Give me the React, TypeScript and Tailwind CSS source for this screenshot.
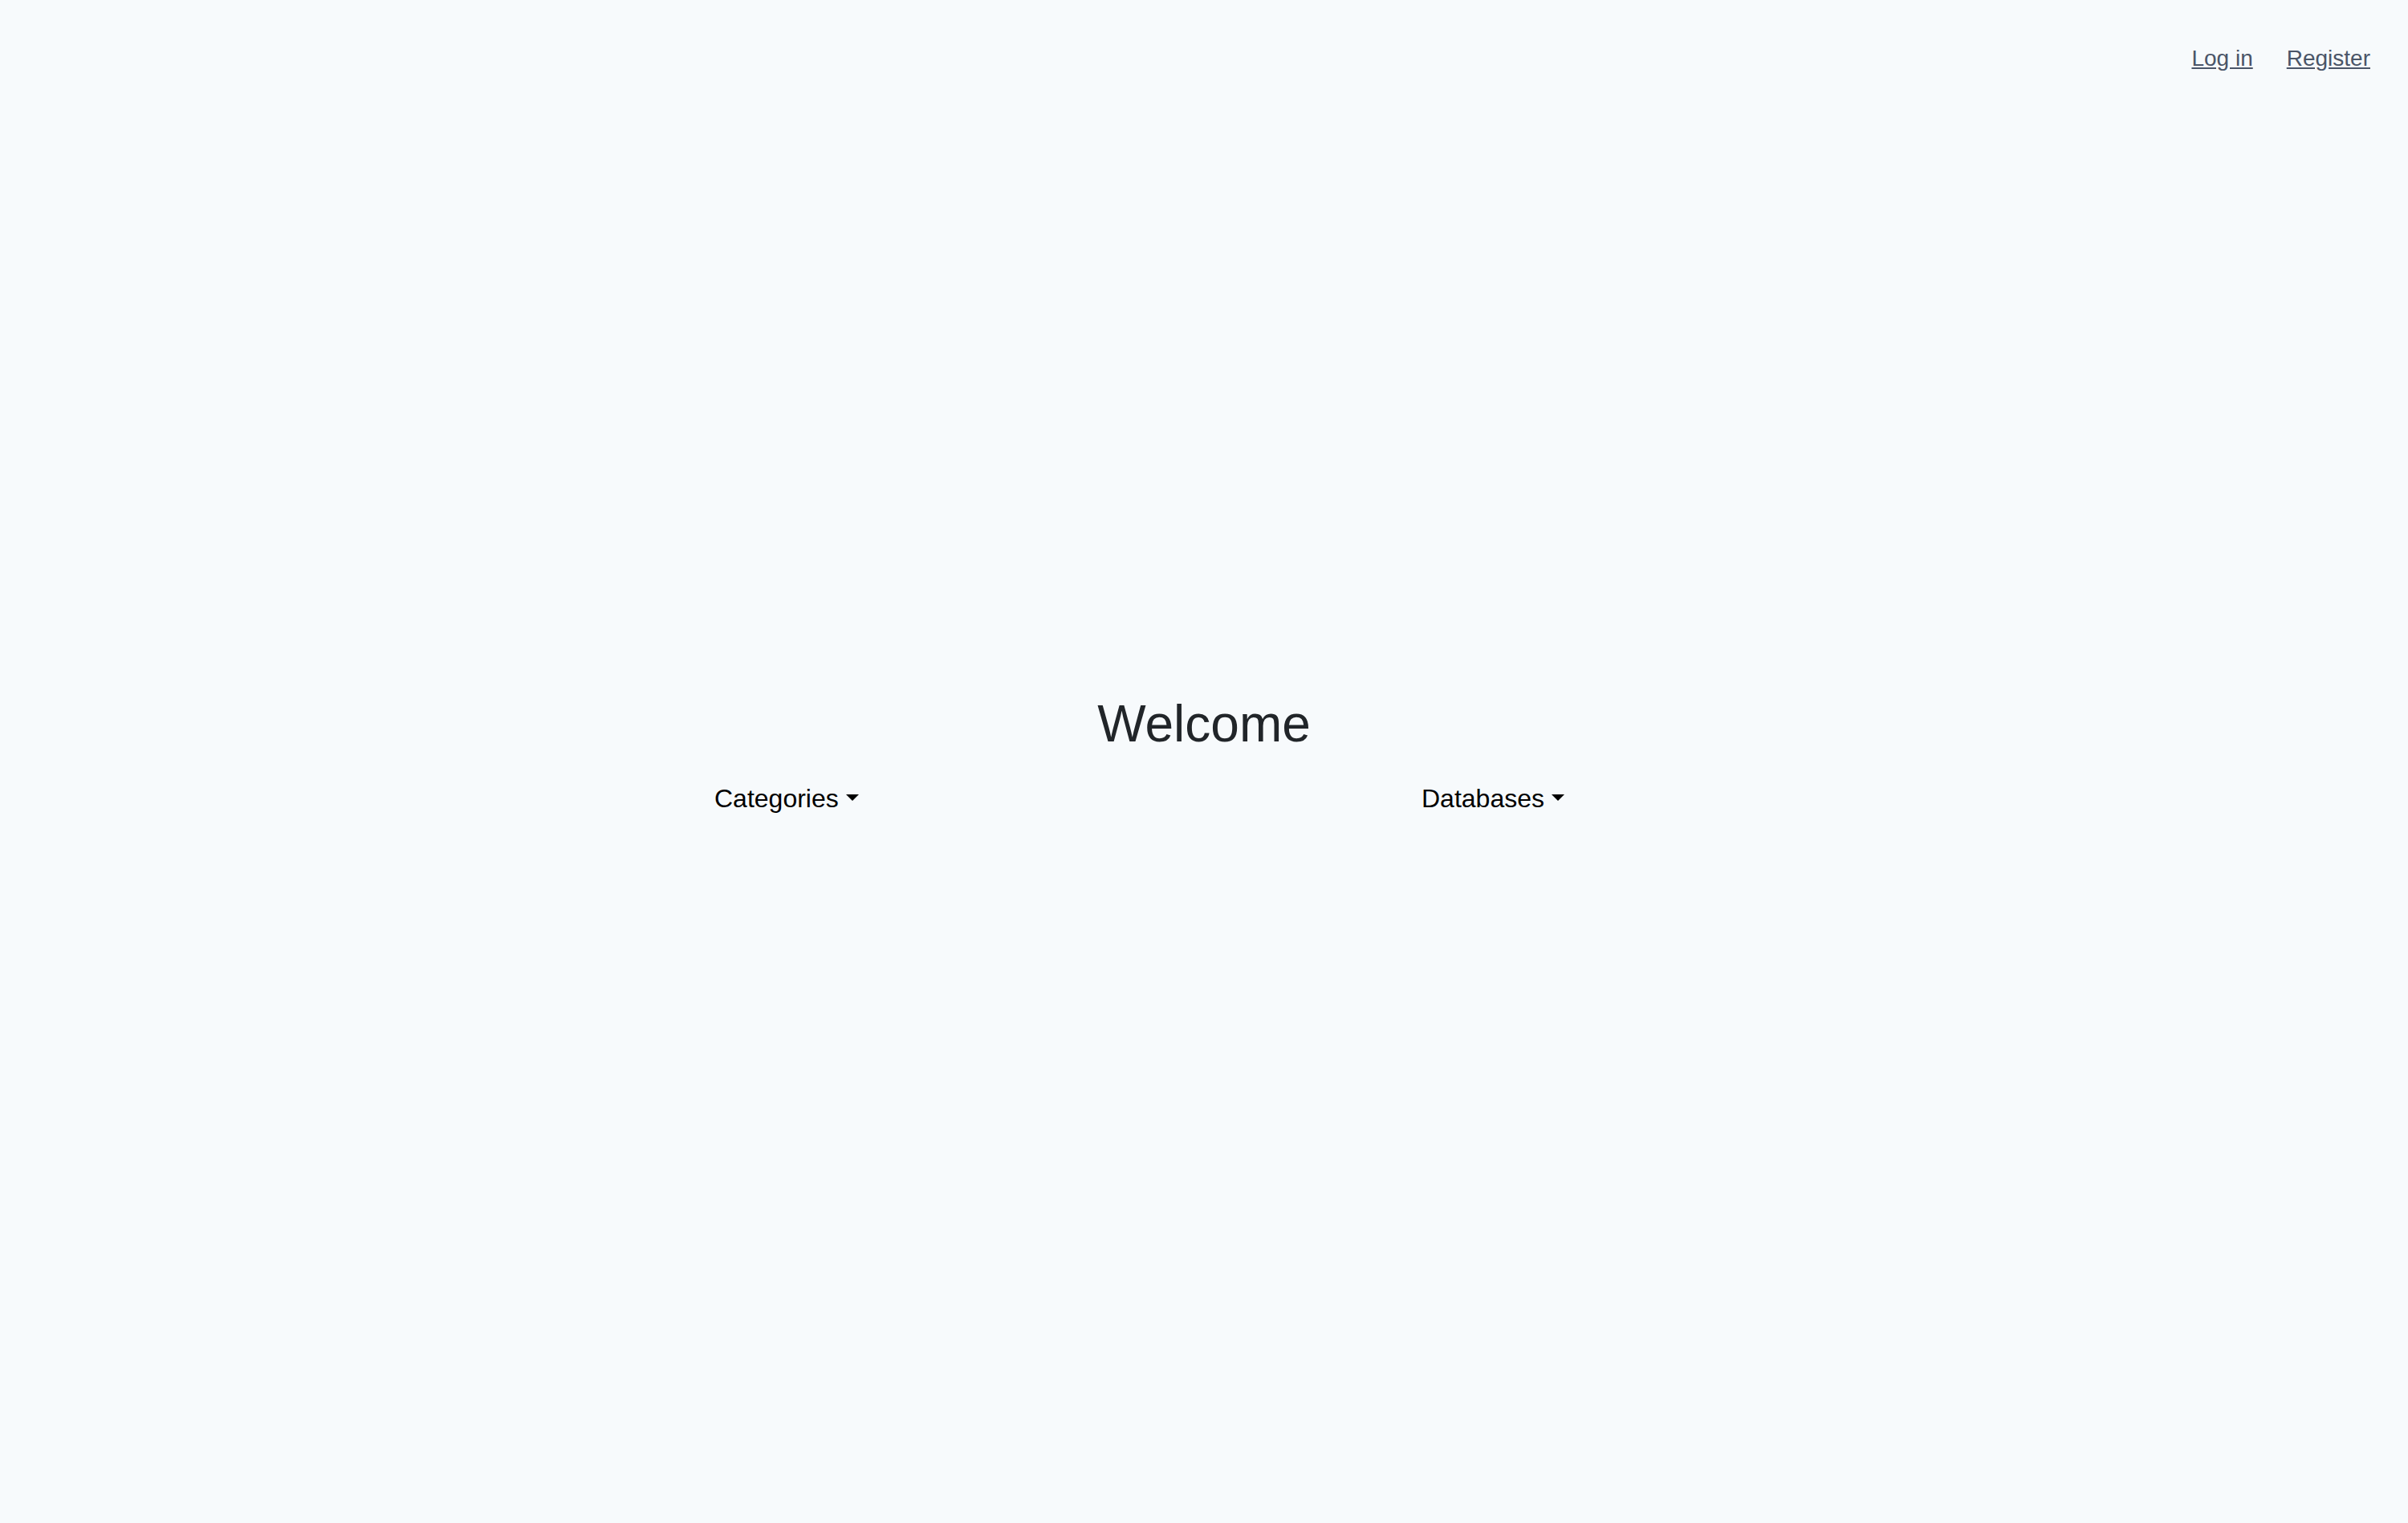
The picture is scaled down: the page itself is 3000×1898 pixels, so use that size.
export default function App() {
  return (
    <div className="min-h-screen bg-[#f7fafc] font-['Liberation_Sans',Arial,sans-serif]">
      {/* Top links */}
      <nav className="flex justify-end gap-[42px] pt-[53px] pr-[47px] text-[28px] leading-[40px] text-[#4a5568]">
        <a href="#" className="underline">Log in</a>
        <a href="#" className="underline">Register</a>
      </nav>

      <main className="mt-[771px]">
        <h1 className="text-center text-[64px] leading-[76px] text-[#212529]">Welcome</h1>

        <div className="mx-auto mt-[33px] grid w-[1762px] grid-cols-2">
          {['Categories', 'Databases'].map((label) => (
            <div key={label} className="pl-[271px]">
              <button className="text-[32px] leading-[45px] text-black">
                {label}
                <span className="ml-[9px] inline-block align-[8px] border-x-[8.5px] border-t-[8px] border-x-transparent border-t-black"></span>
              </button>
            </div>
          ))}
        </div>
      </main>
    </div>
  )
}
